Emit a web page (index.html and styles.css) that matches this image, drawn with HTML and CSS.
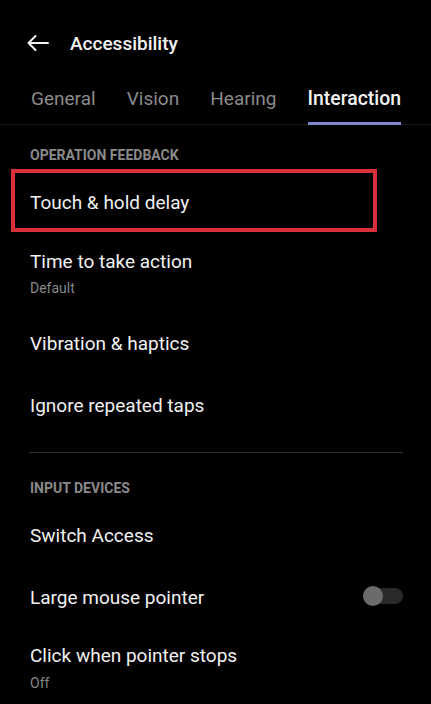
FILE: index.html
```html
<!DOCTYPE html>
<html lang="en">
<head>
<meta charset="utf-8">
<title>Accessibility</title>
<link rel="stylesheet" href="styles.css">
</head>
<body>
<div class="screen">
  <header class="appbar">
    <svg class="back" width="22" height="16" viewBox="0 0 22 16" aria-hidden="true">
      <path d="M21 8H1.5M8.5 1L1.5 8l7 7" fill="none" stroke="#f2f2f2" stroke-width="2" stroke-linecap="round" stroke-linejoin="round"/>
    </svg>
    <h1 class="title">Accessibility</h1>
  </header>

  <nav class="tabs">
    <span class="tab">General</span>
    <span class="tab">Vision</span>
    <span class="tab">Hearing</span>
    <span class="tab tab-active">Interaction</span>
  </nav>

  <section class="group">
    <h2 class="group-title">OPERATION FEEDBACK</h2>
    <div class="row row-highlight"><span class="row-label">Touch &amp; hold delay</span></div>
    <div class="row row-two">
      <span class="row-label">Time to take action</span>
      <span class="row-sub">Default</span>
    </div>
    <div class="row"><span class="row-label">Vibration &amp; haptics</span></div>
    <div class="row"><span class="row-label">Ignore repeated taps</span></div>
  </section>

  <hr class="divider">

  <section class="group">
    <h2 class="group-title group-title-lower">INPUT DEVICES</h2>
    <div class="row"><span class="row-label">Switch Access</span></div>
    <div class="row row-switch">
      <span class="row-label">Large mouse pointer</span>
      <span class="switch"><span class="switch-thumb"></span></span>
    </div>
    <div class="row row-two">
      <span class="row-label">Click when pointer stops</span>
      <span class="row-sub">Off</span>
    </div>
  </section>
</div>
</body>
</html>
```

FILE: styles.css
```css
* {
  box-sizing: border-box;
}

html, body {
  margin: 0;
  padding: 0;
  background: #000;
}

body {
  font-family: Roboto, "Noto Sans", "Liberation Sans", sans-serif;
  color: #f1f1f1;
  width: 431px;
  height: 704px;
  overflow: hidden;
}

.screen {
  display: flex;
  flex-direction: column;
}

/* top bar */
.appbar {
  height: 86px;
  display: flex;
  align-items: center;
  padding-left: 27px;
  gap: 21px;
}

.back {
  display: block;
  margin-top: -1px;
}

.title {
  margin: 0;
  font-size: 19px;
  font-weight: 500;
  line-height: 24px;
  color: #f2f2f2;
  margin-top: 2px;
}

/* tab strip */
.tabs {
  display: flex;
  justify-content: space-between;
  padding: 1px 30px 0 31px;
  border-bottom: 1px solid #161616;
  height: 39px;
}

.tab {
  font-size: 19px;
  line-height: 24px;
  color: #8b8b8b;
  height: 38px;
}

.tab-active {
  color: #f2f2f2;
  font-weight: 500;
  font-size: 19.4px;
  border-bottom: 3px solid #7d87cc;
}

/* settings groups */
.group {
  display: flex;
  flex-direction: column;
}

.group-title {
  margin: 22px 0 6px 30px;
  font-size: 14px;
  line-height: 16px;
  font-weight: 700;
  color: #8a8a8a;
}

.group-title-lower {
  margin-top: 26.6px;
  margin-bottom: 9px;
}

.row {
  display: flex;
  flex-direction: column;
  padding: 19px 28px 19px 30px;
}

.row-label {
  font-size: 19px;
  line-height: 24px;
  color: #f1f1f1;
}

.row-sub {
  font-size: 14px;
  line-height: 18px;
  color: #878787;
  margin-top: 5.7px;
}

.row-two {
  padding-top: 15.5px;
  padding-bottom: 15.5px;
}

.row-highlight {
  margin: 0 54px 2px 11px;
  border: 4px solid #d8303a;
  padding: 17.5px 0 13.5px 15px;
}

.row-switch {
  flex-direction: row;
  align-items: center;
  justify-content: space-between;
}

/* toggle, off state */
.switch {
  position: relative;
  width: 40px;
  height: 16px;
  border-radius: 8px;
  background: #2a2a2a;
  margin-top: -3px;
}

.switch-thumb {
  position: absolute;
  left: 0;
  top: -2px;
  width: 20px;
  height: 20px;
  border-radius: 50%;
  background: #6b6b6b;
}

.divider {
  margin: 15.3px 28px 0 29px;
  border: 0;
  height: 1px;
  background: #2e2e2e;
}
```
